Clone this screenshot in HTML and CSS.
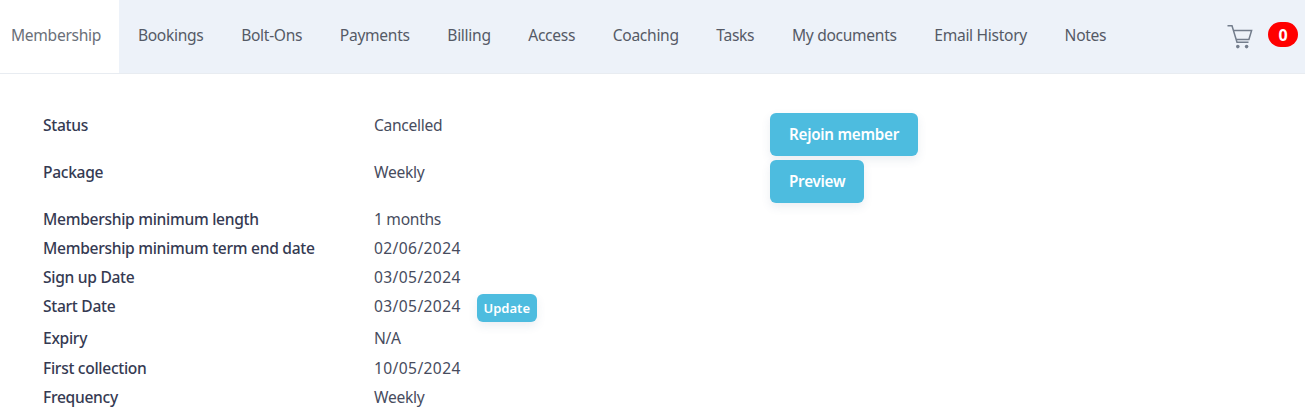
FILE: index.html
```html
<!DOCTYPE html>
<html lang="en">
<head>
<meta charset="utf-8">
<title>Membership</title>
<link rel="stylesheet" href="styles.css">
</head>
<body>
<nav class="tabs">
  <ul class="tab-list">
    <li class="tab tab-active">Membership</li>
    <li class="tab">Bookings</li>
    <li class="tab">Bolt-Ons</li>
    <li class="tab">Payments</li>
    <li class="tab">Billing</li>
    <li class="tab">Access</li>
    <li class="tab">Coaching</li>
    <li class="tab">Tasks</li>
    <li class="tab">My documents</li>
    <li class="tab">Email History</li>
    <li class="tab">Notes</li>
  </ul>
  <div class="cart">
    <svg class="cart-icon" width="26" height="26" viewBox="0 0 26 26" fill="none" stroke="#737d8c" stroke-width="1.5" aria-hidden="true">
      <path d="M0.5 1.8h4.5L10 18.3h11.5"/>
      <path d="M6.3 6.5h18.3l-2.7 9H9"/>
      <circle cx="10.8" cy="22.6" r="1.8" fill="#737d8c" stroke="none"/>
      <circle cx="19.6" cy="22.6" r="1.8" fill="#737d8c" stroke="none"/>
    </svg>
    <span class="badge">0</span>
  </div>
</nav>
<main class="content">
  <div class="details">
    <div class="row row-tall"><span class="label">Status</span><span class="value">Cancelled</span></div>
    <div class="row row-tall"><span class="label">Package</span><span class="value">Weekly</span></div>
    <div class="row"><span class="label">Membership minimum length</span><span class="value">1 months</span></div>
    <div class="row"><span class="label">Membership minimum term end date</span><span class="value date">02/06/2024</span></div>
    <div class="row"><span class="label">Sign up Date</span><span class="value date">03/05/2024</span></div>
    <div class="row row-update"><span class="label">Start Date</span><span class="value date">03/05/2024<button class="btn btn-small">Update</button></span></div>
    <div class="row row-expiry"><span class="label">Expiry</span><span class="value">N/A</span></div>
    <div class="row"><span class="label">First collection</span><span class="value date">10/05/2024</span></div>
    <div class="row"><span class="label">Frequency</span><span class="value">Weekly</span></div>
  </div>
  <div class="actions">
    <button class="btn btn-large">Rejoin member</button>
    <button class="btn btn-large">Preview</button>
  </div>
</main>
</body>
</html>
```
FILE: styles.css
```css
* { box-sizing: border-box; }
html, body { margin: 0; padding: 0; }
body {
  background: #fff;
  font-family: "Noto Sans", "Open Sans", sans-serif;
  font-size: 15.6px;
  letter-spacing: -0.3px;
  color: #3a3f55;
  overflow: hidden;
  height: 412px;
}
.tabs {
  display: flex;
  justify-content: space-between;
  align-items: stretch;
  height: 74px;
  background: #edf2f9;
  border-bottom: 1px solid #e8ecf1;
}
.tab-list {
  display: flex;
  list-style: none;
  margin: 0;
  padding: 0;
}
.tab {
  display: flex;
  align-items: center;
  padding: 0 18.8px 3px;
  color: #555a66;
  font-size: 15.6px;
  white-space: nowrap;
}
.tab-active {
  background: #fff;
  color: #6a6f78;
  padding-left: 11px;
  padding-right: 18px;
}
.cart {
  display: flex;
  align-items: center;
  gap: 15px;
  padding: 0 7px 4px 0;
}
.cart-icon { margin-top: 5px; }
.badge {
  width: 30px;
  height: 25.6px;
  border-radius: 13px;
  background: #f00;
  color: #fff;
  font-weight: 700;
  font-size: 16px;
  display: flex;
  align-items: center;
  justify-content: center;
}
.content {
  display: flex;
  padding: 36.5px 0 0 43px;
}
.details { width: 727px; }
.row {
  display: grid;
  grid-template-columns: 331px 1fr;
  height: 29px;
  line-height: 29px;
  align-items: start;
}
.row-tall { height: 47px; }
.row-update { height: 32px; }
.row-expiry { height: 30px; }
.label { font-weight: 500; color: #353a52; }
.value { color: #474c5e; display: flex; align-items: flex-start; }
.date { letter-spacing: 0.38px; }
.actions {
  display: flex;
  flex-direction: column;
  align-items: flex-start;
  gap: 4.3px;
  margin-top: 2.5px;
}
.btn {
  border: 0;
  background: #4dbcdf;
  color: #fff;
  font-family: inherit;
  font-weight: 600;
  box-shadow: 0 4px 10px rgba(60, 90, 130, 0.1);
}
.btn-large {
  height: 42.7px;
  padding: 0 19px;
  border-radius: 6px;
  font-size: 15.2px;
  letter-spacing: -0.25px;
}
.btn-small {
  height: 28px;
  width: 60px;
  padding: 0;
  margin-top: 2.5px;
  margin-left: 16px;
  border-radius: 6px;
  font-size: 13px;
  letter-spacing: 0;
  line-height: 28px;
}
```
